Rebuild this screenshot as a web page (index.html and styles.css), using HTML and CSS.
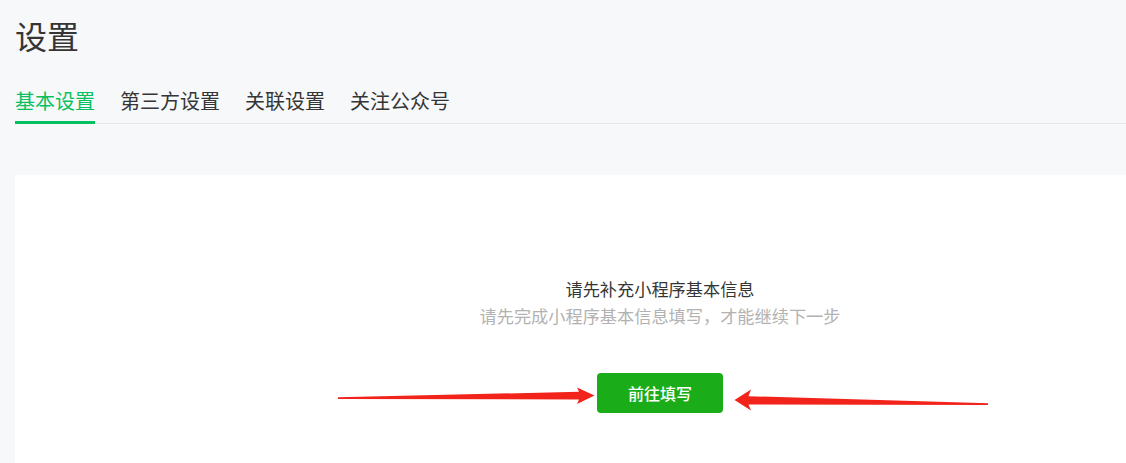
FILE: index.html
```html
<!DOCTYPE html>
<html lang="zh-CN">
<head>
<meta charset="utf-8">
<title>设置</title>
<link rel="stylesheet" href="styles.css">
</head>
<body>
<div class="page">
  <h1 class="title">设置</h1>
  <nav class="tabs">
    <span class="tab active">基本设置</span>
    <span class="tab">第三方设置</span>
    <span class="tab">关联设置</span>
    <span class="tab">关注公众号</span>
  </nav>
  <section class="card">
    <p class="main-msg">请先补充小程序基本信息</p>
    <p class="sub-msg">请先完成小程序基本信息填写，才能继续下一步</p>
    <button class="btn">前往填写</button>
  </section>
  <svg class="arrows" width="1126" height="463" viewBox="0 0 1126 463">
    <path d="M338,397.3 L579,391.8 L577,387.5 L594.5,395.5 L577,404 L579,399.5 L338,399 Z" fill="#f2231b"/>
    <path d="M734.5,400 L751,389.5 L748.5,396.2 L988,403.2 L988,405 L748.5,404.5 L751,410.5 Z" fill="#f2231b"/>
  </svg>
</div>
</body>
</html>
```

FILE: styles.css
```css
html, body {
  margin: 0;
  padding: 0;
  background: #f7f8fa;
  overflow: hidden;
}
body {
  font-family: "Noto Sans CJK SC", "Noto Sans", sans-serif;
  color: #353535;
}
.page {
  position: relative;
  padding: 0 0 0 15px;
  height: 463px;
}
.title {
  margin: 0;
  padding-top: 17px;
  font-size: 32px;
  line-height: 36px;
  font-weight: 400;
  color: #353535;
}
.tabs {
  display: flex;
  gap: 25px;
  margin-top: 34px;
  border-bottom: 1px solid #e7e8ea;
}
.tab {
  font-size: 20px;
  line-height: 28px;
  padding-bottom: 6px;
  border-bottom: 3px solid transparent;
  margin-bottom: -1px;
  color: #353535;
}
.tab.active {
  color: #07c160;
  border-bottom-color: #07c160;
}
.card {
  margin-top: 51px;
  height: 300px;
  background: #fff;
  display: flex;
  flex-direction: column;
  align-items: center;
  padding-top: 100px;
  padding-left: 179px;
  box-sizing: border-box;
}
.main-msg {
  margin: 0;
  font-size: 17.2px;
  line-height: 27px;
  color: #353535;
}
.sub-msg {
  margin: 0;
  font-size: 17.2px;
  line-height: 27px;
  color: #b2b2b2;
}
.btn {
  margin-top: 44px;
  width: 126px;
  height: 40px;
  border: none;
  border-radius: 4px;
  background: #1aad19;
  color: #fff;
  font-family: inherit;
  font-size: 16px;
  font-weight: 500;
}
.arrows {
  position: absolute;
  left: 0;
  top: 0;
  pointer-events: none;
}
```
